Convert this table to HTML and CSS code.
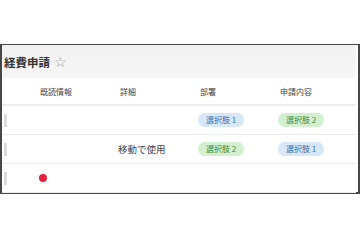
FILE: index.html
```html
<!DOCTYPE html>
<html lang="ja">
<head>
    <meta charset="UTF-8">
    <meta name="viewport" content="width=device-width, initial-scale=1.0">
    <title>経費申請</title>
    <link rel="stylesheet" href="styles.css">
</head>
<body>
    <div class="sheet">
        <div class="sheet-head">
            <span class="sheet-title">経費申請</span>
            <span class="star">☆</span>
        </div>
        <div class="row head-row">
            <div class="handle-cell"></div>
            <div class="cell">既読情報</div>
            <div class="cell">詳細</div>
            <div class="cell">部署</div>
            <div class="cell">申請内容</div>
        </div>
        <div class="row">
            <div class="handle-cell"><span class="handle"></span></div>
            <div class="cell"></div>
            <div class="cell"></div>
            <div class="cell"><span class="tag blue">選択肢 1</span></div>
            <div class="cell"><span class="tag green">選択肢 2</span></div>
        </div>
        <div class="row">
            <div class="handle-cell"><span class="handle"></span></div>
            <div class="cell"></div>
            <div class="cell detail">移動で使用</div>
            <div class="cell"><span class="tag green">選択肢 2</span></div>
            <div class="cell"><span class="tag blue">選択肢 1</span></div>
        </div>
        <div class="row">
            <div class="handle-cell"><span class="handle"></span></div>
            <div class="cell"><span class="unread"></span></div>
            <div class="cell"></div>
            <div class="cell"></div>
            <div class="cell"></div>
        </div>
    </div>
</body>
</html>
```

FILE: styles.css
```css
body {
    margin: 0;
    background-color: #fff;
    font-family: "Noto Sans CJK JP", "Noto Sans", sans-serif;
    color: #333;
}

.sheet {
    margin-top: 44px;
    width: 354px;
    height: 147px;
    border: 2px solid #474747;
    border-top-width: 1px;
    padding-right: 2px;
    background-color: #fff;
}

.sheet-head {
    height: 33px;
    display: flex;
    align-items: center;
    gap: 4px;
    padding-left: 2px;
    background: linear-gradient(#f1f1f1, #f7f7f7);
}

.sheet-title {
    font-size: 11.5px;
    font-weight: bold;
    color: #333;
}

.star {
    font-family: "DejaVu Sans", sans-serif;
    font-size: 14px;
    color: #9a9a9a;
}

.row {
    display: grid;
    grid-template-columns: 38px 80px 80px 80px 76px;
    height: 28px;
    align-items: center;
    border-bottom: 1px solid #ececec;
}

.head-row {
    height: 26px;
    border-bottom: 2px solid #eee;
}

.head-row .cell {
    font-size: 8px;
    color: #444;
}

.handle-cell {
    display: flex;
    align-items: center;
    padding-left: 2px;
}

.handle {
    width: 3px;
    height: 13px;
    background-color: #dcdcdc;
}

.cell {
    display: flex;
    align-items: center;
}

.detail {
    font-size: 9.5px;
    color: #444;
    margin-left: -2px;
}

.tag {
    font-size: 8px;
    line-height: 14px;
    padding: 0 8px;
    margin-left: -2px;
    border-radius: 7px;
}

.tag.blue {
    background-color: #d6e7f7;
    color: #3d72ad;
}

.tag.green {
    background-color: #d2efcf;
    color: #3f8c42;
}

.unread {
    width: 8px;
    height: 8px;
    margin-left: -1px;
    border-radius: 50%;
    background-color: #e3203e;
}
```
